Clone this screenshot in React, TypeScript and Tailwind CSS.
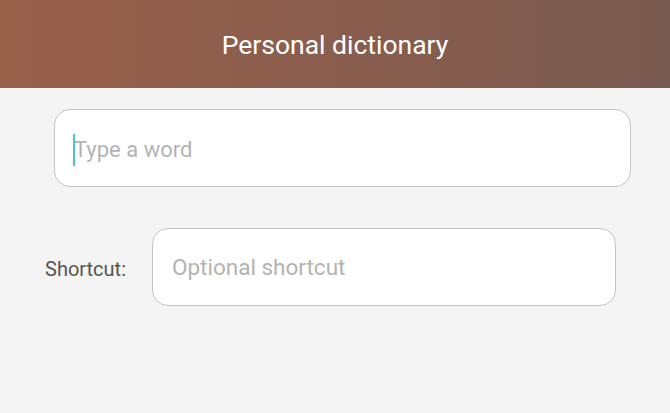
export default function App() {
  return (
    <div className="w-[670px] h-[413px] bg-[#f4f4f4] overflow-hidden" style={{ fontFamily: 'Roboto, "Liberation Sans", sans-serif' }}>
      <header className="h-[88px] bg-gradient-to-r from-[#9a604a] to-[#795a50] flex items-center justify-center">
        <h1 className="text-[26.5px] text-white font-normal mt-[2px]">Personal dictionary</h1>
      </header>

      <div className="pt-[21px] pl-[54px] pr-[39px]">
        <div className="h-[78px] bg-white border border-[#c4c4c4] rounded-[16px] flex items-center pl-[18px] pt-[3px]">
          <span className="w-[2px] h-[32px] bg-[#4cc4c8] -mr-[1px]" />
          <span className="text-[22px] text-[#b3b3b3]">Type a word</span>
        </div>
      </div>

      <div className="flex items-center mt-[41px] pl-[45px]">
        <span className="w-[107px] text-[20px] text-[#555555] pt-[3px]">Shortcut:</span>
        <div className="w-[464px] h-[78px] bg-white border border-[#c4c4c4] rounded-[16px] flex items-center pl-[19px] pt-[2px]">
          <span className="text-[22.5px] text-[#b3b3b3]">Optional shortcut</span>
        </div>
      </div>
    </div>
  );
}
